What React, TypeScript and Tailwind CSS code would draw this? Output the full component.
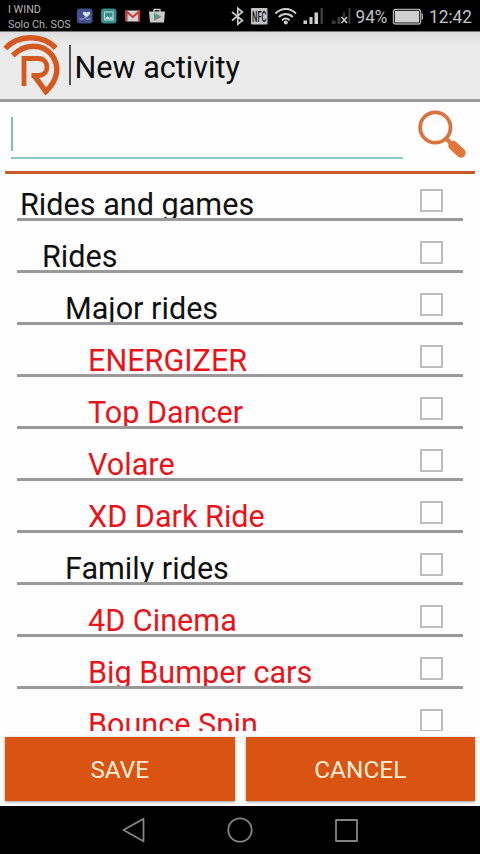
import React from 'react';

interface Activity {
  name: string;
  level: number;
}

const activities: Activity[] = [
  { name: 'Rides and games', level: 0 },
  { name: 'Rides', level: 1 },
  { name: 'Major rides', level: 2 },
  { name: 'ENERGIZER', level: 3 },
  { name: 'Top Dancer', level: 3 },
  { name: 'Volare', level: 3 },
  { name: 'XD Dark Ride', level: 3 },
  { name: 'Family rides', level: 2 },
  { name: '4D Cinema', level: 3 },
  { name: 'Big Bumper cars', level: 3 },
  { name: 'Bounce Spin', level: 3 }
];

const levelStyles = [
  'pl-[3px] text-[#111]',
  'pl-[25px] text-[#111]',
  'pl-[48px] text-[#111]',
  'pl-[71px] text-[#e9141a]'
];

const StatusBar = () => (
  <div className="flex h-8 shrink-0 border-b border-[#777] bg-black text-[#b4b4b4]">
    <div className="w-[77px] shrink-0 pl-2 pt-[2px] text-[10.8px] leading-[15px] whitespace-nowrap">
      <div>I WIND</div>
      <div>Solo Ch. SOS</div>
    </div>
    <svg className="h-8 w-[403px] shrink-0" viewBox="77 0 403 32" fill="none">
      {/* Notifications */}
      <rect x="77" y="8.5" width="15.5" height="15" rx="3" fill="#42518e" />
      <path d="M86.5 17.5l-3.2-3c-1.6-2 1.3-4 3.2-1.8 1.9-2.2 4.8-.2 3.2 1.8z" fill="#d5e3f3" />
      <path d="M79.5 19h4l1.5-2 2 3 1-1h2.5" stroke="#95a6d2" />
      <rect x="101" y="8.5" width="15.5" height="15" rx="3" fill="#398c89" />
      <rect x="104.5" y="12" width="8.5" height="8" stroke="#a9d6d1" strokeWidth="1.3" />
      <path d="M105 19l2.5-3 2 2 1.5-1.5 2 2.5z" fill="#c2e2df" />
      <rect x="125.5" y="10.5" width="14.5" height="11" rx="1" fill="#d5d2d0" />
      <path d="M126.5 21.5v-10l6.3 5.500 6.300-5.500v10" stroke="#c33a39" strokeWidth="2" />
      <path d="M154 12V9.500h6V12" stroke="#c4c8c6" strokeWidth="1.3" />
      <path d="M149 11.500h16l-1 11h-14z" fill="#c9cbc9" />
      <path d="M154 12.500v8.500l4-4.200z" fill="#3ca4b3" />
      <path d="M154 12.500l7.500 4.300h-3.500z" fill="#4e9f55" />
      <path d="M154 21l4-4.200h3.500z" fill="#c55147" />

      {/* Bluetooth, NFC, wifi */}
      <path d="M232 12l10.500 8.500-4.700 3.700V8.300l4.700 3.700L232 20.500" stroke="#c9c9c9" strokeWidth="1.7" />
      <rect x="251" y="8" width="16.500" height="16.500" rx="1" fill="#c2c2c2" />
      <text x="252" y="21.500" textLength="14.500" lengthAdjust="spacingAndGlyphs" fontSize="14.500" fontWeight="500" fill="#111">NFC</text>
      <path d="M275.500 13.500c6-6 14.500-6 20.500 0M278.800 17c4-4 10-4 14 0M282 20.200c2.300-2 5.300-2 7.600 0" stroke="#cfcfcf" strokeWidth="2" />
      <circle cx="285.800" cy="22.500" r="2" fill="#cfcfcf" />

      {/* Signal */}
      <path d="M303.500 20.500h3.500V24h-3.500zM309.500 17h3v7h-3zM314.500 12.500h3.500V24h-3.500z" fill="#cfcfcf" />
      <path d="M320.500 8h2.500v16h-2.500zM332 20.500h3.500V24H332zM337.500 17h3v7h-3zM343 12.500h2V17h-2zM348.500 8h2v16h-2z" fill="#3c3c3c" />
      <path d="M341.500 17l5.500 6M347 17l-5.500 6" stroke="#c9c9c9" strokeWidth="1.7" />

      <text x="355.500" y="22.800" textLength="32" lengthAdjust="spacingAndGlyphs" fontSize="18" fill="#c4c4c4">94%</text>
      <rect x="393.500" y="9.500" width="27" height="14.500" rx="2" stroke="#a8a8a8" strokeWidth="1.5" />
      <rect x="395" y="11" width="24" height="11.500" fill="#cfcfcf" />
      <path d="M421.500 13.500h1.500v6h-1.500z" fill="#a8a8a8" />
      <text x="429" y="22.800" textLength="43" lengthAdjust="spacingAndGlyphs" fontSize="18" fill="#c4c4c4">12:42</text>
    </svg>
  </div>
);

const Logo = () => (
  <svg className="h-[67px] w-[69px] shrink-0" viewBox="0 32 69 67" fill="none" stroke="#d45820" strokeWidth="5.4">
    <path d="M5.300 48.500C18 34.500 42 34 55.800 48" />
    <path d="M12.800 55.500C25 43 42 43.500 51.500 54.500c8.500 11 7 25-5.700 37L34.500 76" />
    <path d="M24 86V58.500h14c12 0 12 17 0 17h-6.500" strokeWidth="4.8" />
  </svg>
);

const ActivityRow = ({ activity }: { activity: Activity }) => (
  <li className="flex h-[52px] shrink-0 items-end border-b-[3px] border-[#999]">
    <div
      className={`h-[33px] flex-1 overflow-hidden text-[30.6px] leading-[40px] whitespace-nowrap ${levelStyles[activity.level]}`}
    >
      {activity.name}
    </div>
    <button
      role="checkbox"
      aria-checked="false"
      aria-label={activity.name}
      className="mr-[20px] mb-[6px] h-[23px] w-[23px] border-2 border-[#bdbdbd]"
    />
  </li>
);

const App = () => {
  return (
    <div className="flex h-[854px] w-[480px] flex-col overflow-hidden bg-[#fefefe] font-['Roboto',sans-serif]">
      <StatusBar />

      {/* Header */}
      <header className="flex h-[70px] shrink-0 border-b-[3px] border-[#999] bg-linear-to-b from-[#dedede] to-[#ebebeb] to-20%">
        <Logo />
        <div className="mt-[13px] h-10 w-[1.5px] bg-[#555]" />
        <h1 className="pl-[4px] pt-[18px] text-[30.6px] leading-[35px] text-[#0c0c0c]">New activity</h1>
      </header>

      {/* Search */}
      <div className="mx-[5px] flex h-[72px] shrink-0 border-b-[3px] border-[#c95a2d]">
        <div className="ml-[6px] mt-[15px] h-[42px] w-[392px] border-b-2 border-[#8cc9c8]">
          <div className="h-[34px] w-[1.5px] bg-[#7fbcbc]" />
        </div>
        <svg className="ml-[15px] mt-[7px] h-[52px] w-[50px]" viewBox="418 109 50 52" fill="none">
          <circle cx="435.300" cy="127.500" r="15.200" stroke="#d9733f" strokeWidth="3.8" />
          <path d="M446 138.500l5 5" stroke="#e0763f" strokeWidth="4" />
          <path d="M453 145.500l8 7.500" stroke="#e5763b" strokeWidth="9.5" strokeLinecap="round" />
        </svg>
      </div>

      {/* Activities */}
      <div className="mx-[17px] h-[557px] shrink-0 overflow-hidden">
        <ul className="-mt-[5px] flex flex-col">
          {activities.map((activity) => (
            <ActivityRow key={activity.name} activity={activity} />
          ))}
        </ul>
      </div>

      {/* Actions */}
      <div className="flex h-[75px] shrink-0 gap-[11px] px-[5px] pt-[6px] pb-[5px] text-[24.4px] text-[#ffedd8]">
        <button className="h-[64px] flex-1 bg-[#d95412] pt-[2px] shadow-[0_1px_3px_#0006]">SAVE</button>
        <button className="h-[64px] flex-1 bg-[#d95412] pt-[2px] shadow-[0_1px_3px_#0006]">CANCEL</button>
      </div>

      <nav className="flex h-12 shrink-0 bg-black">
        <svg className="h-12 w-[480px]" viewBox="0 806 480 48" fill="none" stroke="#858585" strokeWidth="1.8" strokeLinejoin="round">
          <path d="M123.500 830l20-11.300v22.600z" />
          <circle cx="240" cy="830" r="11.700" />
          <rect x="336" y="820" width="21" height="21" />
        </svg>
      </nav>
    </div>
  );
};

export default App;
